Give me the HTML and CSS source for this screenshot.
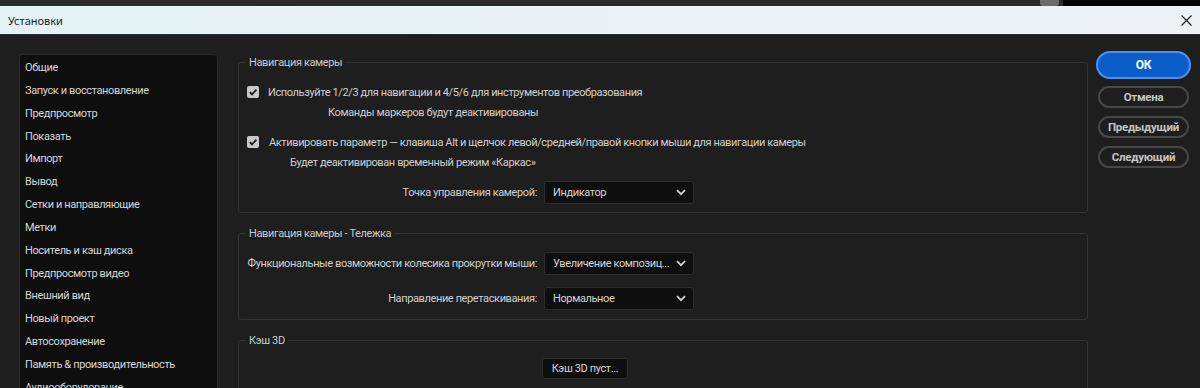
FILE: index.html
```html
<!DOCTYPE html>
<html lang="ru">
<head>
    <meta charset="UTF-8">
    <meta name="viewport" content="width=device-width, initial-scale=1.0">
    <title>Установки</title>
    <link rel="stylesheet" href="styles.css">
</head>
<body>
    <!-- strip of the window behind the dialog -->
    <div class="behind">
        <div class="behind-tab"></div>
        <div class="behind-dark"></div>
    </div>

    <div class="titlebar">
        <span class="title">Установки</span>
        <svg class="close-x" width="11" height="11" viewBox="0 0 11 11">
            <path d="M0.5 0.5 L10.5 10.5 M10.5 0.5 L0.5 10.5" stroke="#1a1a1a" stroke-width="1.1" fill="none"/>
        </svg>
    </div>

    <div class="dialog">
        <ul class="sidebar">
            <li>Общие</li>
            <li>Запуск и восстановление</li>
            <li>Предпросмотр</li>
            <li>Показать</li>
            <li>Импорт</li>
            <li>Вывод</li>
            <li>Сетки и направляющие</li>
            <li>Метки</li>
            <li>Носитель и кэш диска</li>
            <li>Предпросмотр видео</li>
            <li>Внешний вид</li>
            <li>Новый проект</li>
            <li>Автосохранение</li>
            <li>Память &amp; производительность</li>
            <li>Аудиооборудование</li>
        </ul>

        <div class="main">
            <fieldset class="group group-nav">
                <legend>Навигация камеры</legend>
                <div class="check-row first">
                    <span class="check">
                        <svg width="12" height="12" viewBox="0 0 12 12"><path d="M2.8 6.2 L5 8.4 L9.4 3.6" stroke="#1c1c1c" stroke-width="1.8" fill="none"/></svg>
                    </span>
                    <span>Используйте 1/2/3 для навигации и 4/5/6 для инструментов преобразования</span>
                </div>
                <div class="note note-markers">Команды маркеров будут деактивированы</div>
                <div class="check-row second">
                    <span class="check">
                        <svg width="12" height="12" viewBox="0 0 12 12"><path d="M2.8 6.2 L5 8.4 L9.4 3.6" stroke="#1c1c1c" stroke-width="1.8" fill="none"/></svg>
                    </span>
                    <span>Активировать параметр — клавиша Alt и щелчок левой/средней/правой кнопки мыши для навигации камеры</span>
                </div>
                <div class="note note-wire">Будет деактивирован временный режим «Каркас»</div>
                <div class="field field-point">
                    <span class="label">Точка управления камерой:</span>
                    <div class="select">
                        <span>Индикатор</span>
                        <svg width="10" height="7" viewBox="0 0 10 7"><path d="M1 1.2 L5 5.2 L9 1.2" stroke="#d2d2d2" stroke-width="1.8" fill="none"/></svg>
                    </div>
                </div>
            </fieldset>

            <fieldset class="group group-dolly">
                <legend>Навигация камеры - Тележка</legend>
                <div class="field field-wheel">
                    <span class="label">Функциональные возможности колесика прокрутки мыши:</span>
                    <div class="select">
                        <span>Увеличение композиц...</span>
                        <svg width="10" height="7" viewBox="0 0 10 7"><path d="M1 1.2 L5 5.2 L9 1.2" stroke="#d2d2d2" stroke-width="1.8" fill="none"/></svg>
                    </div>
                </div>
                <div class="field field-drag">
                    <span class="label">Направление перетаскивания:</span>
                    <div class="select">
                        <span>Нормальное</span>
                        <svg width="10" height="7" viewBox="0 0 10 7"><path d="M1 1.2 L5 5.2 L9 1.2" stroke="#d2d2d2" stroke-width="1.8" fill="none"/></svg>
                    </div>
                </div>
            </fieldset>

            <fieldset class="group group-cache">
                <legend>Кэш 3D</legend>
                <div class="cache-row">
                    <button class="plain-btn">Кэш 3D пуст...</button>
                </div>
            </fieldset>
        </div>

        <div class="actions">
            <button class="btn btn-ok">ОК</button>
            <button class="btn">Отмена</button>
            <button class="btn">Предыдущий</button>
            <button class="btn">Следующий</button>
        </div>
    </div>
</body>
</html>
```

FILE: styles.css
```css
/* General page styling */
body {
    margin: 0;
    padding: 0;
    height: 388px;
    overflow: hidden;
    background-color: #1e1e1e;
    font-family: Roboto, "Noto Sans", sans-serif;
    font-size: 11px;
    letter-spacing: -0.38px;
    color: #cfcfcf;
}

/* Window behind the dialog */
.behind {
    height: 6px;
    display: flex;
    background-color: #2b2b2b;
    padding-left: 1040px;
}

.behind-tab {
    width: 19px;
    background-color: #6b6b6b;
    border-radius: 0 0 3px 3px;
}

.behind-dark {
    flex: 1;
    margin-left: 4px;
    background-color: #050505;
}

/* Title bar */
.titlebar {
    height: 28px;
    display: flex;
    align-items: center;
    justify-content: space-between;
    padding: 0 8px;
    background: linear-gradient(to right, #e3f3f5, #edf2f6 60%, #eef2f7);
    border-bottom: 1px solid #2a2a2a;
}

.title {
    font-family: "Noto Sans", sans-serif;
    font-size: 11px;
    letter-spacing: 0;
    color: #1a1a1a;
}

/* Dialog body */
.dialog {
    display: flex;
    align-items: flex-start;
    padding: 0 10px 0 19px;
    gap: 20px;
}

.sidebar {
    list-style: none;
    margin: 19px 0 0 0;
    padding: 2px 0 0 5px;
    width: 192px;
    height: 400px;
    background-color: #0e0e0e;
    border: 1px solid #2b2b2b;
    border-radius: 4px;
    flex-shrink: 0;
}

.sidebar li {
    line-height: 22.85px;
    color: #d6d6d6;
    white-space: nowrap;
}

.main {
    width: 850px;
    margin-top: 20px;
    flex-shrink: 0;
}

/* Group boxes */
.group {
    margin: 0;
    padding: 0;
    border: 1px solid #333333;
    border-radius: 3px;
    min-width: 0;
}

.group + .group {
    margin-top: 13px;
}

.group legend {
    margin-left: 7px;
    padding: 0 3px;
    line-height: 15px;
    color: #cacaca;
}

.group-nav {
    padding-bottom: 8px;
}

.group-dolly {
    padding-bottom: 9px;
}

.group-cache {
    height: 80px;
}

.check-row {
    display: flex;
    align-items: center;
    height: 16px;
    padding-left: 8px;
    gap: 9px;
    white-space: nowrap;
}

.check-row.first {
    margin-top: 14px;
}

.check-row.second {
    margin-top: 13px;
    gap: 10px;
}

.check {
    width: 12px;
    height: 12px;
    background-color: #c9c9c9;
    border-radius: 2px;
    display: flex;
}

.note {
    height: 16px;
    line-height: 16px;
    margin-top: 5px;
    white-space: nowrap;
}

.note-markers {
    padding-left: 89px;
}

.note-wire {
    padding-left: 51px;
}

/* Label + dropdown rows */
.field {
    display: flex;
    align-items: center;
    gap: 7px;
}

.field .label {
    width: 298px;
    display: flex;
    justify-content: flex-end;
    white-space: nowrap;
}

.field-point {
    margin-top: 10px;
}

.field-wheel {
    margin-top: 11px;
}

.field-drag {
    margin-top: 12px;
}

.select {
    width: 150px;
    height: 23px;
    box-sizing: border-box;
    display: flex;
    align-items: center;
    justify-content: space-between;
    padding: 0 7px 0 8px;
    background-color: #0e0e0e;
    border: 1px solid #2e2e2e;
    border-radius: 3px;
    color: #d4d4d4;
    white-space: nowrap;
}

.cache-row {
    margin-top: 10px;
    padding-left: 303px;
}

.plain-btn {
    height: 21px;
    width: 86px;
    padding: 0;
    font-family: inherit;
    font-size: 11px;
    letter-spacing: inherit;
    color: #d4d4d4;
    background-color: #0e0e0e;
    border: 1px solid #2e2e2e;
    border-radius: 3px;
}

/* Right button column */
.actions {
    margin: 16px 0 0 -12px;
    width: 95px;
    display: flex;
    flex-direction: column;
    align-items: center;
    gap: 8px;
    flex-shrink: 0;
}

.btn {
    width: 91px;
    height: 22px;
    padding: 0;
    font-family: inherit;
    font-size: 11.5px;
    font-weight: bold;
    letter-spacing: -0.3px;
    color: #c4c4c4;
    background-color: #1e1e1e;
    border: 2px solid #474747;
    border-radius: 11px;
}

.btn-ok {
    width: 95px;
    height: 28px;
    margin-bottom: -1px;
    font-size: 12px;
    color: #ffffff;
    background-color: #0b5dcc;
    border: 2px solid #4b93ea;
    border-radius: 14px;
}
```
